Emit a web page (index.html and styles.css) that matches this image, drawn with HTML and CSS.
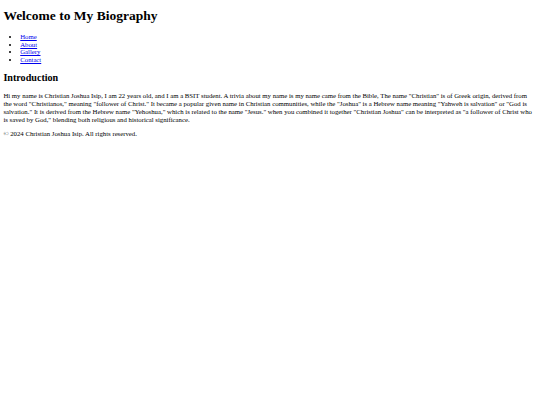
FILE: index.html
```html
<!DOCTYPE html>
<html lang="en">
<head>
<meta charset="utf-8">
<title>My Biography</title>
<link rel="stylesheet" href="styles.css">
</head>
<body>
<header>
<h1 class="title">Welcome to My Biography</h1>
<nav>
<ul class="nav-list">
<li><a href="#">Home</a></li>
<li><a href="#">About</a></li>
<li><a href="#">Gallery</a></li>
<li><a href="#">Contact</a></li>
</ul>
</nav>
</header>
<section class="intro">
<h2 class="intro-title">Introduction</h2>
<p class="intro-text">Hi my name is Christian Joshua Isip, I am 22 years old, and I am a BSIT student. A trivia about my name is my name came from the Bible, The name "Christian" is of Greek origin, derived from the word "Christianos," meaning "follower of Christ." It became a popular given name in Christian communities, while the "Joshua" is a Hebrew name meaning "Yahweh is salvation" or "God is salvation." It is derived from the Hebrew name "Yehoshua," which is related to the name "Jesus." when you combined it together "Christian Joshua" can be interpreted as "a follower of Christ who is saved by God," blending both religious and historical significance.</p>
</section>
<footer>
<p class="copy">&copy; 2024 Christian Joshua Isip. All rights reserved.</p>
</footer>
</body>
</html>
```
FILE: styles.css
```css
html {
  background: #ffffff;
}
body {
  margin: 3.375px;
  font-family: "Liberation Serif", "Times New Roman", serif;
  font-size: 6.75px;
  line-height: 7.76px;
  color: #000000;
}
.title {
  font-size: 13.5px;
  line-height: 15.52px;
  font-weight: bold;
  margin: 5px 0 9.045px;
}
.nav-list {
  margin: 6.75px 0;
  padding-left: 16.875px;
  list-style: disc;
}
.nav-list a {
  color: #0000ee;
  text-decoration: underline;
}
.intro-title {
  font-size: 10.125px;
  line-height: 11.64px;
  font-weight: bold;
  margin: 8.404px 0;
}
.intro-text,
.copy {
  margin: 6.75px 0;
}
```
